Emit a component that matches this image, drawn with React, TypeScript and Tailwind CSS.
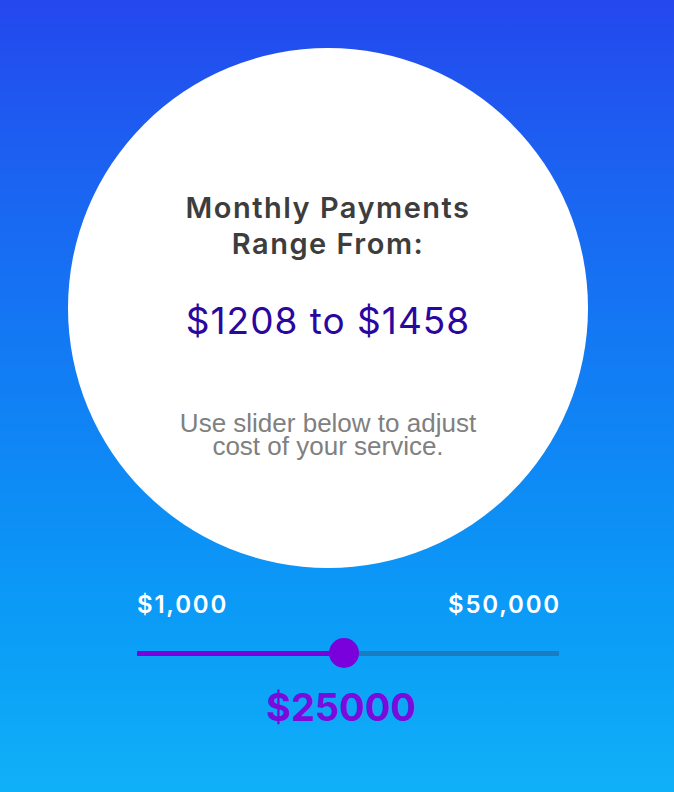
import { FC } from 'react';

const App: FC = () => {
  const min = 1000;
  const max = 50000;
  const value = 25000;
  // thumb position along the track
  const pct = ((value - min) / (max - min)) * 100;

  return (
    <div className="w-[674px] h-[792px] bg-gradient-to-b from-[#2447ee] to-[#10b0f8] overflow-hidden">
      {/* Circle */}
      <div className="ml-[68px] pt-[48px]">
        <div className="w-[520px] h-[520px] rounded-full bg-white flex flex-col items-center pt-[142px]">
          <h2 className="text-[29px] leading-[36px] font-semibold text-[#3d3d3d] text-center tracking-[1.5px] font-['Inter',sans-serif]">
            Monthly Payments
            <br />
            Range From:
          </h2>
          <p className="mt-[37px] text-[37px] leading-[44px] text-[#2a079f] tracking-[1px] font-['Inter',sans-serif]">
            $1208 to $1458
          </p>
          <p className="mt-[69px] text-[26px] leading-[23px] text-[#808080] text-center font-['Liberation_Sans',Arial,sans-serif]">
            Use slider below to adjust
            <br />
            cost of your service.
          </p>
        </div>
      </div>

      {/* Slider */}
      <div className="ml-[137px] w-[422px] mt-[21px] font-['Inter',sans-serif]">
        <div className="flex justify-between text-white text-[24px] leading-[32px] font-semibold tracking-[1.8px]">
          <span>$1,000</span>
          <span className="-mr-[2px]">$50,000</span>
        </div>
        <div className="relative h-[30px] mt-[17px] flex items-center">
          <div className="w-full h-[5px] bg-[#1a7dbf] flex">
            <div className="h-full bg-[#7a00dc]" style={{ width: `${pct}%` }} />
          </div>
          <div
            className="absolute top-0 w-[30px] h-[30px] rounded-full bg-[#7a00dc] -translate-x-1/2"
            style={{ left: `${pct}%` }}
          />
        </div>
        <div className="mt-[16px] w-[408px] text-center text-[38px] leading-[46px] font-bold text-[#7b0adc]">
          ${value}
        </div>
      </div>
    </div>
  );
};

export default App;
